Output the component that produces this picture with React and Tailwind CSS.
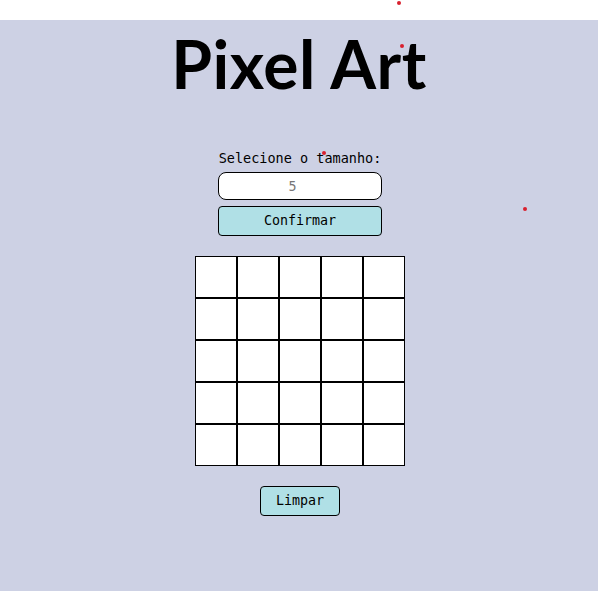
import React, { useState } from 'react';

const mono = { fontFamily: '"DejaVu Sans Mono", monospace' };

const dots = [
  'left-[397px] top-[1px]',
  'left-[400px] top-[44px]',
  'left-[322px] top-[151px]',
  'left-[523px] top-[207px]',
];

const App = () => {
  const [size, setSize] = useState('');
  const [board, setBoard] = useState(5);

  const cells = Array.from({ length: board * board });

  return (
    <div className="bg-white min-h-[591px] pt-[20px] relative">
      <div className="bg-[#cdd1e4] min-h-[571px] flex flex-col items-center">
        <h1 className="mt-[4px] text-[66px] leading-[80px] font-bold text-black font-['Lato',sans-serif] tracking-[0.5px]">
          Pixel Art
        </h1>
        <div className="mt-[46px] ml-[2px] flex flex-col items-center" style={mono}>
          <label className="text-[13.5px] leading-[16px] text-black">Selecione o tamanho:</label>
          <input
            type="number"
            value={size}
            onChange={(e) => setSize(e.target.value)}
            placeholder="5"
            className="mt-[6px] w-[164px] h-[28px] bg-white border border-black rounded-[8px] text-center text-[13.33px] placeholder:text-[#777] outline-none"
          />
          <button
            onClick={() => setBoard(Number(size) || 5)}
            className="mt-[6px] w-[164px] h-[30px] bg-[#b0e0e6] border border-black rounded-[4px] text-[13.33px] text-black"
          >
            Confirmar
          </button>
        </div>
        <div
          className="mt-[20px] ml-[2px] grid"
          style={{ gridTemplateColumns: `repeat(${board}, 42px)` }}
        >
          {cells.map((_, i) => (
            <div key={i} className="w-[42px] h-[42px] bg-white border border-black" />
          ))}
        </div>
        <button
          className="mt-[20px] ml-[2px] w-[80px] h-[30px] bg-[#b0e0e6] border border-black rounded-[4px] text-[13.33px] text-black"
          style={mono}
        >
          Limpar
        </button>
      </div>
      {dots.map((d) => (
        <div key={d} className={`absolute w-[4px] h-[4px] rounded-full bg-[#d8202e] ${d}`} />
      ))}
    </div>
  );
};

export default App;
